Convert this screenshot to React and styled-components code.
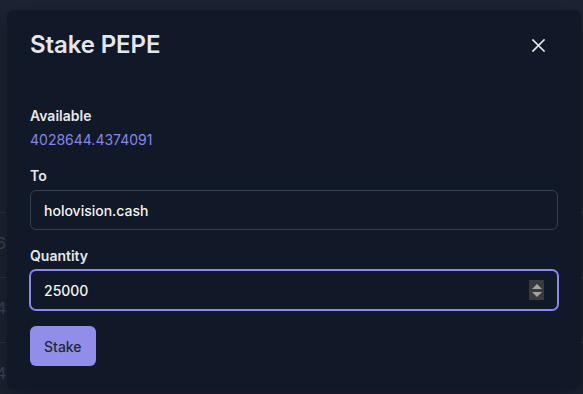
import React from 'react';
import styled, { createGlobalStyle } from 'styled-components';

const Global = createGlobalStyle`
  html, body { margin: 0; padding: 0; background: #1b2231; }
  body {
    font-family: Inter, "Noto Sans", sans-serif;
    width: 583px;
    height: 394px;
    overflow: hidden;
    -webkit-font-smoothing: antialiased;
  }
  * { box-sizing: border-box; }
`;

const Page = styled.div`
  position: relative;
  width: 583px;
  height: 394px;
  overflow: hidden;
  background: #1c2332;
`;

const BgTable = styled.div`
  display: flex;
  flex-direction: column;
  padding-top: 148px;
`;

const BgRow = styled.div`
  height: 65px;
  border-bottom: 1px solid #2b3343;
  display: flex;
  align-items: center;
  padding-left: 0;
  color: #3f4756;
  font-size: 16px;
  font-family: Inter, sans-serif;
`;

const BgCell = styled.span`
  margin-left: -4px;
  transform: translateY(${(p) => p.$dy}px);
`;

const Modal = styled.div`
  position: absolute;
  left: 7px;
  top: 10px;
  width: 574px;
  height: 379px;
  background: #111827;
  border-radius: 6px;
  padding: 19px 23px 23px;
  display: flex;
  flex-direction: column;
  box-shadow: 0 10px 25px rgba(0, 0, 0, 0.35);
`;

const Header = styled.div`
  display: flex;
  align-items: center;
  justify-content: space-between;
  height: 32px;
`;

const Title = styled.h2`
  margin: 0;
  font-size: 24px;
  line-height: 32px;
  font-weight: 600;
  color: #e5e7eb;
  letter-spacing: -0.1px;
`;

const CloseButton = styled.button`
  width: 32px;
  height: 32px;
  margin-right: 4px;
  border: none;
  background: transparent;
  display: flex;
  align-items: center;
  justify-content: center;
  padding: 0;
  color: #e5e7eb;
  cursor: pointer;
`;

const Body = styled.div`
  margin-top: 45px;
  display: flex;
  flex-direction: column;
`;

const Field = styled.div`
  display: flex;
  flex-direction: column;
  gap: ${(p) => p.$gap || 4}px;
  margin-bottom: 16px;
`;

const Label = styled.div`
  font-size: 14px;
  line-height: 20px;
  font-weight: 600;
  color: #e5e7eb;
`;

const Value = styled.div`
  font-size: 14px;
  line-height: 20px;
  font-weight: 400;
  color: #8587ea;
`;

const InputWrap = styled.div`
  position: relative;
  width: 528px;
`;

const Input = styled.input`
  width: 100%;
  height: 40px;
  background: #111827;
  border: 1px solid ${(p) => (p.$focused ? '#8a87ef' : '#374151')};
  box-shadow: ${(p) => (p.$focused ? '0 0 0 1px #8a87ef' : 'none')};
  border-radius: 6px;
  padding: 0 13px;
  font-family: Inter, "Noto Sans", sans-serif;
  font-size: 14px;
  font-weight: 500;
  color: #f3f4f6;
  outline: none;
`;

const Spinner = styled.div`
  position: absolute;
  right: 14px;
  top: 10px;
  width: 15px;
  height: 20px;
  background: #3a3a3a;
  display: flex;
  flex-direction: column;
  align-items: center;
  justify-content: center;
  gap: 3px;
`;

const Arrow = styled.div`
  width: 0;
  height: 0;
  border-left: 5px solid transparent;
  border-right: 5px solid transparent;
  ${(p) =>
    p.$up
      ? 'border-bottom: 5px solid #a3a3a3;'
      : 'border-top: 5px solid #a3a3a3;'}
`;

const StakeButton = styled.button`
  align-self: flex-start;
  height: 40px;
  padding: 0 14px;
  background: #918eea;
  border: none;
  border-radius: 6px;
  font-family: Inter, "Noto Sans", sans-serif;
  font-size: 14px;
  font-weight: 500;
  color: #1f2937;
  cursor: pointer;
`;

export default function App() {
  return (
    <Page>
      <Global />
      <BgTable>
        <BgRow><BgCell $dy={0}> </BgCell></BgRow>
        <BgRow><BgCell $dy={-2}>6</BgCell></BgRow>
        <BgRow><BgCell $dy={-2}>4</BgCell></BgRow>
        <BgRow><BgCell $dy={-2}>4</BgCell></BgRow>
      </BgTable>
      <Modal>
        <Header>
          <Title>Stake PEPE</Title>
          <CloseButton aria-label="Close">
            <svg width="13" height="13" viewBox="0 0 13 13" fill="none">
              <path d="M1 1L12 12M12 1L1 12" stroke="currentColor" strokeWidth="1.7" strokeLinecap="square" />
            </svg>
          </CloseButton>
        </Header>
        <Body>
          <Field>
            <Label>Available</Label>
            <Value>4028644.4374091</Value>
          </Field>
          <Field>
            <Label>To</Label>
            <InputWrap>
              <Input defaultValue="holovision.cash" />
            </InputWrap>
          </Field>
          <Field>
            <Label>Quantity</Label>
            <InputWrap>
              <Input $focused defaultValue="25000" />
              <Spinner>
                <Arrow $up />
                <Arrow />
              </Spinner>
            </InputWrap>
          </Field>
          <StakeButton>Stake</StakeButton>
        </Body>
      </Modal>
    </Page>
  );
}
